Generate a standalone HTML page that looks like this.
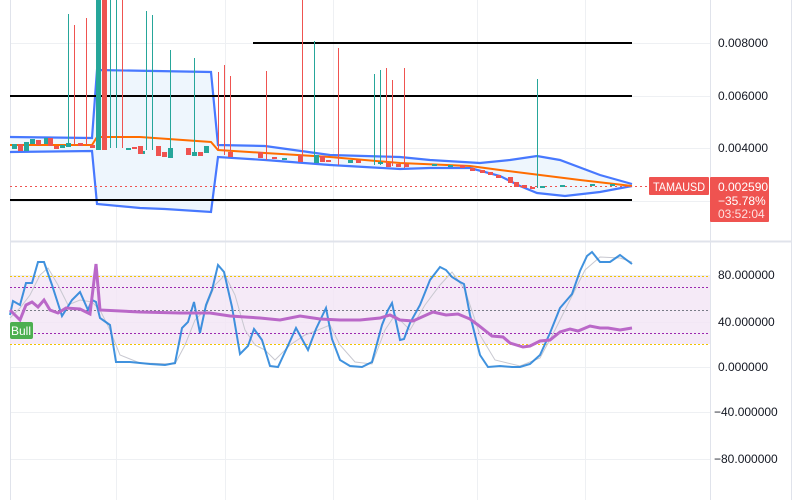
<!DOCTYPE html>
<html><head><meta charset="utf-8"><style>
html,body{margin:0;padding:0;background:#fff;width:802px;height:500px;overflow:hidden;font-family:"Liberation Sans",sans-serif}
</style></head><body>
<svg width="802" height="500" xmlns="http://www.w3.org/2000/svg" style="position:absolute;left:0;top:0">
<g stroke="#eef0f3" stroke-width="1">
<line x1="116.5" y1="0" x2="116.5" y2="500"/><line x1="225.5" y1="0" x2="225.5" y2="500"/><line x1="333.5" y1="0" x2="333.5" y2="500"/><line x1="477.5" y1="0" x2="477.5" y2="500"/><line x1="585.5" y1="0" x2="585.5" y2="500"/>
<line x1="10" y1="43.5" x2="710" y2="43.5"/><line x1="10" y1="96.5" x2="710" y2="96.5"/><line x1="10" y1="148.5" x2="710" y2="148.5"/><line x1="10" y1="201.5" x2="710" y2="201.5"/>
<line x1="10" y1="275.5" x2="710" y2="275.5"/><line x1="10" y1="322.5" x2="710" y2="322.5"/><line x1="10" y1="367.5" x2="710" y2="367.5"/><line x1="10" y1="412.5" x2="710" y2="412.5"/><line x1="10" y1="459.5" x2="710" y2="459.5"/>
</g>
<line x1="10.5" y1="0" x2="10.5" y2="500" stroke="#e0e3eb"/>
<line x1="710.5" y1="0" x2="710.5" y2="500" stroke="#e0e3eb"/>
<line x1="791.5" y1="0" x2="791.5" y2="500" stroke="#e0e3eb"/>
<line x1="10" y1="241.5" x2="792" y2="241.5" stroke="#e0e3eb" stroke-width="2"/>

<path d="M10,137 L92,138 L97,70 L211,72 L218,145 L265,146 L330,155 L400,157 L430,160 L480,163 L510,160 L537,156 L560,160 L600,175 L632,184 L632,186 L600,192 L565,196 L537,193 L520,186 L500,176 L470,168 L430,168 L400,169 L330,165 L265,160 L218,157 L211,212 L165,209 L140,208 L97,204 L92,151 L10,152 Z" fill="#eef6fd"/>
<g fill="none" stroke-width="2.2" stroke="#2962ff" opacity="0.85">
<polyline points="10,137 92,138 97,70 211,72 218,145 265,146 330,155 400,157 430,160 480,163 510,160 537,156 560,160 600,175 632,184"/>
<polyline points="10,152 92,151 97,204 140,208 165,209 211,212 218,157 265,160 330,165 400,169 430,168 470,168 500,176 520,186 537,193 565,196 600,192 632,186"/>
</g>
<polyline fill="none" stroke="#ff6d00" stroke-width="2" points="10,145 92,145 97,137 140,137 211,142 218,150 265,153 330,157 400,163 470,166 500,170 540,175 580,180 632,186"/>

<g stroke="#000" stroke-width="2"><line x1="253" y1="43" x2="632" y2="43"/><line x1="10" y1="96" x2="632" y2="96"/><line x1="10" y1="200" x2="632" y2="200"/></g>
<line x1="10" y1="186.5" x2="710" y2="186.5" stroke="#ef5350" stroke-dasharray="2,3"/>

<g stroke-width="1">
<g stroke="#26a69a"><line x1="68.5" y1="14" x2="68.5" y2="145"/><line x1="110.5" y1="0" x2="110.5" y2="148"/><line x1="116.5" y1="0" x2="116.5" y2="148"/><line x1="146.5" y1="11" x2="146.5" y2="150"/><line x1="152.5" y1="15" x2="152.5" y2="150"/><line x1="170.5" y1="50" x2="170.5" y2="152"/><line x1="194.5" y1="58" x2="194.5" y2="155"/><line x1="314.5" y1="41" x2="314.5" y2="162"/><line x1="374.5" y1="74" x2="374.5" y2="165"/><line x1="380.5" y1="70" x2="380.5" y2="165"/><line x1="537.5" y1="79" x2="537.5" y2="188"/></g>
<g stroke="#ef5350"><line x1="74.5" y1="25" x2="74.5" y2="145"/><line x1="86.5" y1="18" x2="86.5" y2="145"/><line x1="122.5" y1="0" x2="122.5" y2="148"/><line x1="218.5" y1="72" x2="218.5" y2="150"/><line x1="224.5" y1="65" x2="224.5" y2="155"/><line x1="230.5" y1="76" x2="230.5" y2="155"/><line x1="266.5" y1="71" x2="266.5" y2="160"/><line x1="302.5" y1="0" x2="302.5" y2="162"/><line x1="338.5" y1="48" x2="338.5" y2="165"/><line x1="386.5" y1="68" x2="386.5" y2="166"/><line x1="392.5" y1="80" x2="392.5" y2="166"/><line x1="404.5" y1="68" x2="404.5" y2="168"/></g>
</g>
<rect x="96" y="0" width="5" height="150" fill="#26a69a"/>
<rect x="102" y="0" width="5" height="150" fill="#ef5350"/>
<g fill="#26a69a">
<rect x="12" y="144" width="5" height="5"/><rect x="24" y="142" width="5" height="9"/><rect x="30" y="139" width="5" height="5"/><rect x="44" y="138" width="5" height="6"/><rect x="60" y="145" width="5" height="3"/><rect x="66" y="143" width="5" height="4"/><rect x="126" y="148" width="5" height="2"/><rect x="140" y="151" width="5" height="3"/><rect x="168" y="148" width="5" height="10"/><rect x="192" y="152" width="5" height="4"/><rect x="204" y="146" width="5" height="7"/><rect x="282" y="158" width="5" height="2"/><rect x="314" y="155" width="5" height="8"/><rect x="348" y="160" width="5" height="3"/><rect x="378" y="162" width="5" height="2"/><rect x="432" y="164" width="5" height="2"/><rect x="448" y="165" width="5" height="2"/><rect x="540" y="186" width="5" height="2"/><rect x="560" y="185" width="5" height="2"/><rect x="590" y="184" width="5" height="2"/><rect x="610" y="184" width="5" height="2"/></g>
<g fill="#ef5350">
<rect x="18" y="144" width="5" height="7"/><rect x="36" y="140" width="5" height="5"/><rect x="48" y="138" width="5" height="8"/><rect x="54" y="146" width="5" height="3"/><rect x="78" y="143" width="5" height="3"/><rect x="90" y="145" width="5" height="3"/><rect x="132" y="147" width="5" height="2"/><rect x="138" y="146" width="5" height="8"/><rect x="156" y="146" width="5" height="10"/><rect x="162" y="152" width="5" height="5"/><rect x="186" y="148" width="5" height="7"/><rect x="198" y="152" width="5" height="4"/><rect x="228" y="152" width="5" height="5"/><rect x="258" y="152" width="5" height="6"/><rect x="272" y="157" width="5" height="2"/><rect x="298" y="155" width="5" height="7"/><rect x="320" y="156" width="5" height="6"/><rect x="326" y="160" width="5" height="2"/><rect x="356" y="160" width="5" height="3"/><rect x="386" y="163" width="5" height="4"/><rect x="396" y="164" width="5" height="3"/><rect x="404" y="164" width="5" height="3"/><rect x="460" y="165" width="5" height="3"/><rect x="470" y="168" width="5" height="3"/><rect x="480" y="170" width="5" height="3"/><rect x="488" y="172" width="5" height="3"/><rect x="496" y="175" width="5" height="3"/><rect x="508" y="177" width="5" height="6"/><rect x="514" y="182" width="5" height="5"/><rect x="522" y="185" width="5" height="3"/><rect x="530" y="187" width="5" height="2"/></g>

<rect x="10" y="276" width="700" height="68" fill="#f3e5f5" opacity="0.8"/>
<g stroke-width="1" fill="none">
<line x1="10" y1="276.5" x2="710" y2="276.5" stroke="#f2c400" stroke-dasharray="2,2"/>
<line x1="10" y1="344.5" x2="710" y2="344.5" stroke="#f2c400" stroke-dasharray="2,2"/>
<line x1="10" y1="287.5" x2="710" y2="287.5" stroke="#9c27b0" stroke-dasharray="2,2"/>
<line x1="10" y1="333.5" x2="710" y2="333.5" stroke="#9c27b0" stroke-dasharray="2,2"/>
<line x1="10" y1="310.5" x2="710" y2="310.5" stroke="#787b86" stroke-dasharray="2,2"/>
</g>
<polyline fill="none" stroke="#c8c8d0" stroke-width="1" points="10,318 20,308 30,295 40,275 48,268 58,285 68,305 80,300 92,302 100,310 110,330 120,355 140,363 175,364 185,345 195,320 205,310 215,285 225,275 235,295 245,330 255,345 265,350 275,360 290,345 305,335 318,330 330,325 340,345 355,362 372,364 385,330 395,315 410,330 425,305 440,285 452,272 465,290 480,335 495,360 520,366 540,358 555,330 570,300 585,270 600,257 620,258 632,262"/>
<polyline fill="none" stroke="#1e7fd8" stroke-width="2" opacity="0.85" points="10,315 13,301 20,305 26,283 32,283 38,262 44,262 52,285 62,316 72,300 80,292 88,310 92,300 96,302 100,318 110,325 116,362 130,362 150,364 165,365 175,363 182,328 188,322 194,302 200,333 206,305 212,290 218,265 224,272 232,307 240,354 248,346 254,329 262,340 270,366 278,367 285,352 296,328 308,350 316,329 326,308 332,339 340,360 350,366 362,367 372,362 382,325 388,310 392,303 400,340 404,339 410,323 420,305 430,280 440,267 446,270 452,277 460,282 464,284 470,315 480,355 488,367 500,366 512,367 520,367 530,364 540,355 550,333 560,308 572,294 580,271 587,256 592,252 600,262 610,262 620,255 632,264"/>
<polyline fill="none" stroke="#ba68c8" stroke-width="3" points="10,310 20,320 26,305 32,302 38,307 44,300 50,310 58,313 66,308 80,309 90,314 96,264 100,310 140,312 180,313 210,313 230,316 260,318 280,320 300,316 320,319 340,320 360,320 380,318 390,315 400,320 413,321 433,312 446,315 458,314 470,319 478,325 492,336 503,337 510,343 523,347 530,346 540,341 550,340 560,332 570,329 578,331 590,326 600,328 608,328 620,330 632,328"/>
<rect x="10" y="322" width="23" height="17" rx="2" fill="#4caf50"/>
<text x="11" y="335" font-size="12" fill="#fff" font-family="Liberation Sans, sans-serif">Bull</text>

<g font-size="12" fill="#131722" font-family="Liberation Sans, sans-serif">
<text x="718" y="47">0.008000</text><text x="718" y="100">0.006000</text><text x="718" y="152">0.004000</text>
<text x="718" y="279">80.000000</text><text x="718" y="326">40.000000</text><text x="718" y="371">0.000000</text><text x="714" y="416">−40.000000</text><text x="714" y="463">−80.000000</text>
</g>
<rect x="649" y="177" width="60" height="18" rx="1" fill="#ef5350"/>
<text x="653" y="191" font-size="12" fill="#fff" font-family="Liberation Sans, sans-serif" textLength="52" lengthAdjust="spacingAndGlyphs">TAMAUSD</text>
<rect x="710" y="177" width="59" height="45" rx="1" fill="#ef5350"/>
<g font-size="12" fill="#fff" font-family="Liberation Sans, sans-serif"><text x="718" y="191">0.002590</text><text x="718" y="205">−35.78%</text><text x="718" y="218" fill="#fde0df">03:52:04</text></g>
</svg>
</body></html>
